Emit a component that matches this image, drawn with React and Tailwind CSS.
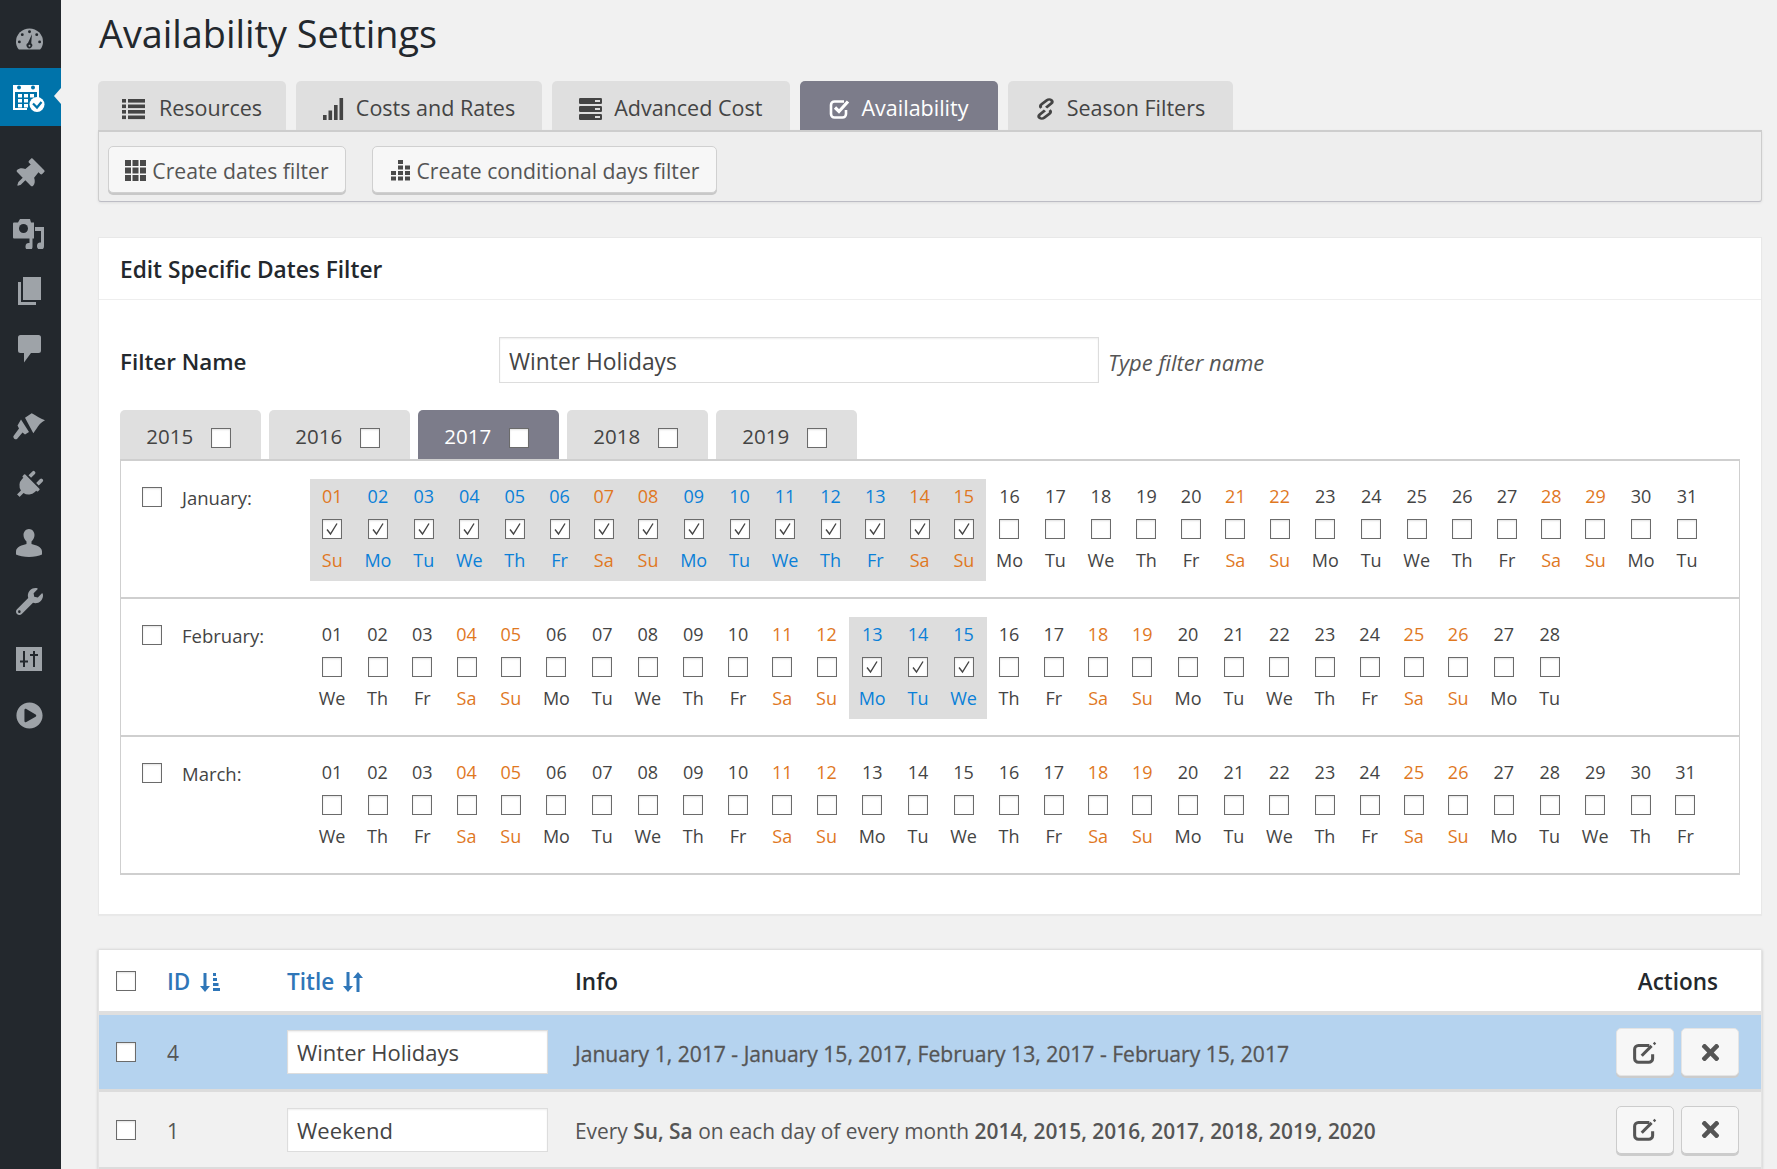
import { FaThumbtack, FaPlug, FaWrench, FaPlayCircle, FaTimes } from "react-icons/fa";

const dayWidth = {
  Su: "w-[44.5px]",
  Mo: "w-[46.8px]",
  Tu: "w-[45px]",
  We: "w-[46px]",
  Th: "w-[45px]",
  Fr: "w-[44.5px]",
  Sa: "w-[44px]",
};
const weekdays = ["Su", "Mo", "Tu", "We", "Th", "Fr", "Sa"];

const months = [
  { name: "January:", days: 31, start: 0, selected: [1, 15], labelCol: "w-[189px]" },
  { name: "February:", days: 28, start: 3, selected: [13, 15], labelCol: "w-[188px]" },
  { name: "March:", days: 31, start: 3, selected: [], labelCol: "w-[188px]" },
];

const Check = ({ checked, className = "" }) => (
  <span className={`block w-5 h-5 bg-white border border-[#6b6b6b] shadow-[inset_0_1px_2px_rgba(0,0,0,0.12)] ${className}`}>
    {checked && (
      <svg viewBox="0 0 18 18" className="w-full h-full">
        <path d="M4 9.5l3.5 4.5L14 3.5" fill="none" stroke="#444" strokeWidth="1.4" />
      </svg>
    )}
  </span>
);

const Day = ({ n, start, selected }) => {
  const wd = weekdays[(start + n - 1) % 7];
  const weekend = wd === "Su" || wd === "Sa";
  const isSel = selected.length > 0 && n >= selected[0] && n <= selected[1];
  const color = weekend ? "text-[#e0781f]" : isSel ? "text-[#0a80d8]" : "text-[#444]";
  return (
    <div className={`${dayWidth[wd]} shrink-0 h-[102px] flex flex-col items-center pt-[5px] ${isSel ? "bg-[#dddddd]" : ""}`}>
      <span className={`text-[18px] leading-6 ${color}`}>{String(n).padStart(2, "0")}</span>
      <Check checked={isSel} className="mt-[11px]" />
      <span className={`text-[18px] leading-6 mt-[9px] ${color}`}>{wd}</span>
    </div>
  );
};

const MonthRow = ({ name, days, start, selected, labelCol }) => (
  <div className="h-[138px] flex border-t-2 border-[#cfcfcf] pt-[18px]">
    <div className={`${labelCol} shrink-0 flex pl-[21px] pt-[7px]`}>
      <Check className="mt-px" />
      <span className="ml-[20px] text-[18.5px] leading-6 text-[#444]">{name}</span>
    </div>
    <div className="flex items-start">
      {Array.from({ length: days }, (_, i) => (
        <Day key={i} n={i + 1} start={start} selected={selected} />
      ))}
    </div>
  </div>
);

const Grid3 = () => (
  <svg viewBox="0 0 21 21" className="w-[21px] h-[21px]" fill="#4a4a4a">
    {[0, 7.5, 15].map((y) =>
      [0, 7.5, 15].map((x) => <rect key={`${x}-${y}`} x={x} y={y} width="6" height="6" />)
    )}
  </svg>
);

const Stacked = () => (
  <svg viewBox="0 0 21 21" className="w-[21px] h-[21px]" fill="#4a4a4a">
    <rect x="8" y="0" width="5" height="4" />
    <rect x="8" y="5.5" width="5" height="4" />
    <rect x="15" y="5.5" width="5" height="4" />
    <rect x="8" y="11" width="5" height="4" />
    <rect x="15" y="11" width="5" height="4" />
    <rect x="1" y="11" width="5" height="4" />
    <rect x="1" y="16.5" width="5" height="4" />
    <rect x="8" y="16.5" width="5" height="4" />
    <rect x="15" y="16.5" width="5" height="4" />
  </svg>
);

const ListIcon = () => (
  <svg viewBox="0 0 23 22" className="w-[23px] h-[22px]" fill="#444">
    {[1, 6.5, 12, 17.5].map((y) => (
      <g key={y}>
        <rect x="0" y={y} width="4" height="3.6" />
        <rect x="6" y={y} width="17" height="3.6" />
      </g>
    ))}
  </svg>
);

const SignalIcon = () => (
  <svg viewBox="0 0 21 22" className="w-[21px] h-[22px]" fill="#444">
    <rect x="0" y="17" width="3.6" height="5" />
    <rect x="5.5" y="12.5" width="3.6" height="9.5" />
    <rect x="11" y="7" width="3.6" height="15" />
    <rect x="16.5" y="0" width="3.6" height="22" />
  </svg>
);

const ServerIcon = () => (
  <svg viewBox="0 0 23 22" className="w-[23px] h-[22px]">
    {[0, 8, 16].map((y) => (
      <g key={y}>
        <rect x="0" y={y} width="23" height="6" rx="1.2" fill="#444" />
        <rect x="16" y={y + 2} width="5" height="2" fill="#ddd" />
      </g>
    ))}
  </svg>
);

const ChainIcon = () => (
  <svg viewBox="0 0 18 26" preserveAspectRatio="none" className="w-[21px] h-[24px]" fill="none" stroke="#444" strokeWidth="2.6">
    <path d="M9.5 11.5L14 7a2.6 2.6 0 000-3.7 2.6 2.6 0 00-3.7 0L5.5 8a2.6 2.6 0 000 3.8" />
    <path d="M8.5 14.5L4 19a2.6 2.6 0 000 3.7 2.6 2.6 0 003.7 0l4.8-4.7a2.6 2.6 0 000-3.8" />
  </svg>
);

const CheckSquare = () => (
  <svg viewBox="0 0 22 22" className="w-[22px] h-[22px]" fill="none" stroke="#fff">
    <path d="M17 12v4a3.500 3.500 0 01-3.500 3.500H5.500A3.500 3.500 0 012 16V7a3.500 3.500 0 013.500-3.500H15" strokeWidth="2.600" />
    <path d="M6 9.500l4 4L19 3.500" strokeWidth="3.200" />
  </svg>
);

const EditIcon = () => (
  <svg viewBox="0 0 22 21" className="w-[24px] h-[23px]" fill="none" stroke="#555">
    <path d="M18 12v4a3.500 3.500 0 01-3.500 3.500H5A3.500 3.500 0 011.500 16V7.500A3.500 3.500 0 015 4h10" strokeWidth="2.800" />
    <path d="M8 13.500L17 4.500" strokeWidth="2.800" />
    <path d="M19 3l1.500-1.500" strokeWidth="2.200" />
  </svg>
);

const tabs = [
  { label: "Resources", icon: <ListIcon />, width: "w-[188px]", gap: "gap-[14px]" },
  { label: "Costs and Rates", icon: <SignalIcon />, width: "w-[246px]", gap: "gap-[12px]" },
  { label: "Advanced Cost", icon: <ServerIcon />, width: "w-[237.5px]", gap: "gap-[12px]" },
  { label: "Availability", icon: <CheckSquare />, width: "w-[198px]", gap: "gap-[11px]", active: true },
  { label: "Season Filters", icon: <ChainIcon />, width: "w-[225px]", gap: "gap-[11px]" },
];

const sideColor = "#9ea3a8";

const Gauge = () => (
  <svg viewBox="0 0 28 22" className="w-[27px] h-[22px]">
    <path d="M3 22C1 19.500 0 17 0 14a14 14 0 0128 0c0 3-1 5.500-3 8z" fill={sideColor} />
    <circle cx="14" cy="3.500" r="1.500" fill="#23282d" />
    <circle cx="6.500" cy="6.500" r="1.500" fill="#23282d" />
    <circle cx="21.500" cy="6.500" r="1.500" fill="#23282d" />
    <circle cx="3.500" cy="14" r="1.500" fill="#23282d" />
    <circle cx="24.500" cy="14" r="1.500" fill="#23282d" />
    <path d="M16.500 6L15.800 15.500a2.900 2.900 0 11-3.400-.3z" fill="#23282d" />
    <circle cx="14" cy="18" r="1" fill={sideColor} />
  </svg>
);

const CalendarIcon = () => (
  <svg viewBox="0 0 32 29" className="w-8 h-[29px]">
    <path d="M0 2h26v15h-2V9H2v16h12v2H0z" fill="#fff" />
    <circle cx="6" cy="4.500" r="2" fill="#0073aa" />
    <circle cx="20" cy="4.500" r="2" fill="#0073aa" />
    {[5, 11, 17].map((x) =>
      [11, 16, 21].map((y) => (x === 17 && y > 15 ? null : <rect key={`${x}${y}`} x={x} y={y} width="4" height="3.500" fill="#fff" />))
    )}
    <circle cx="24" cy="21.500" r="7.500" fill="#fff" />
    <path d="M20 20.500l4 4 4.500-5.500" fill="none" stroke="#0073aa" strokeWidth="2.200" />
  </svg>
);

const Media = () => (
  <svg viewBox="0 0 32 31" className="w-8 h-[31px]">
    <path d="M1 4.500h4l2-3.500h10l1 3.500h3v16H1a1 1 0 01-1-1V5.500a1 1 0 011-1z" fill={sideColor} />
    <circle cx="10.500" cy="10.500" r="4.500" fill="#23282d" />
    <path d="M31 9v19a3.500 3.500 0 11-3-3.400V13h-6v-4z" fill={sideColor} />
    <path d="M16.500 16.500h3v12a3.500 3.500 0 11-3-3.400z" fill={sideColor} />
  </svg>
);

const Pages = () => (
  <svg viewBox="0 0 23 28" className="w-[23px] h-7">
    <path d="M0 5h3v20h15v3H0z" fill={sideColor} />
    <rect x="5" y="0" width="18" height="23" fill={sideColor} />
  </svg>
);

const Comment = () => (
  <svg viewBox="0 0 23 28" className="w-[23px] h-7">
    <path d="M2.500 0h18A2.500 2.500 0 0123 2.500v13a2.500 2.500 0 01-2.500 2.500H13l-7 9.500V18H2.500A2.500 2.500 0 010 15.500v-13A2.500 2.500 0 012.500 0z" fill={sideColor} />
  </svg>
);

const Brush = () => (
  <svg viewBox="0 0 32 28" className="w-8 h-7">
    <path d="M12 4.700L18.700.3C23 2 27 6 32 7.300 28 9 25 13 24 15l-3.700 5.300z" fill={sideColor} />
    <path d="M8 6.500L16 19l-4 2.500-2.500-2L4 26a2.500 2.500 0 01-3.500-3l5.500-7.500-1.500-3z" fill={sideColor} />
  </svg>
);

const UserIcon = () => (
  <svg viewBox="0 0 26 28" className="w-[26px] h-7">
    <path d="M13 0c3.200 0 5.500 2.800 5.500 6 0 2.800-1.500 5.200-3 6.500v2.500c4 1 10.500 2.800 10.500 7.500v3c-3 1.500-8 2.500-13 2.500S3 27 0 25.500v-3C0 17.800 6.500 16 10.500 15v-2.500C9 11.200 7.500 8.800 7.500 6 7.500 2.800 9.800 0 13 0z" fill={sideColor} />
  </svg>
);

const Sliders = () => (
  <svg viewBox="0 0 26 24" className="w-[26px] h-6">
    <rect width="26" height="24" fill={sideColor} />
    <path d="M8 4v16M18 4v16M4 14.500h8M14 8h8" stroke="#23282d" strokeWidth="2" />
  </svg>
);

const sideItems = [
  { icon: <Gauge />, mt: "mt-[10px]" },
  { icon: <CalendarIcon />, active: true },
  { icon: <FaThumbtack className="text-[30px] rotate-45 mr-[3px]" />, mt: "mt-[20px]" },
  { icon: <Media /> },
  { icon: <Pages /> },
  { icon: <Comment /> },
  { icon: <Brush />, mt: "mt-[20px]" },
  { icon: <FaPlug className="text-[29px] rotate-45 mr-[2px]" /> },
  { icon: <UserIcon /> },
  { icon: <FaWrench className="text-[27px]" /> },
  { icon: <Sliders /> },
  { icon: <FaPlayCircle className="text-[27px]" />, mt: "-mt-[2px]" },
];

const Sidebar = () => (
  <div className="w-[61px] shrink-0 bg-[#23282d] text-[#9ea3a8]">
    {sideItems.map((item, i) => (
      <div
        key={i}
        className={`relative h-[58px] flex items-center justify-center pr-[3px] ${item.mt || ""} ${item.active ? "bg-[#0073aa]" : ""}`}
      >
        {item.icon}
        {item.active && (
          <span className="absolute right-0 top-[20px] border-y-[8px] border-r-[7px] border-y-transparent border-r-[#f1f1f1]" />
        )}
      </div>
    ))}
  </div>
);

const ActionBtn = ({ children, flat }) => (
  <button
    className={`w-[58px] h-[48px] flex items-center justify-center rounded-[5px] bg-[#f7f7f7] text-[#555] ${
      flat ? "border border-[#ccc] shadow-[0_2px_0_#ccc]" : "border border-[#e4e4e4] shadow-[0_2px_0_#ccc]"
    }`}
  >
    {children}
  </button>
);

const Row = ({ id, title, bg, children, flat, height }) => (
  <div className={`flex items-center pl-[17px] pr-[22px] ${height} ${bg} border-b-[3px] border-[#dcdcdc]`}>
    <Check className="shrink-0" />
    <span className="w-[151px] pl-[31px] pt-[4px] shrink-0 text-[21px] text-[#555]">{id}</span>
    <input
      readOnly
      value={title}
      className="w-[261px] h-[44px] shrink-0 bg-white border border-[#ddd] px-[9px] text-[22px] font-medium text-[#444] shadow-[inset_0_1px_2px_rgba(0,0,0,0.07)] outline-none"
    />
    <div className="ml-[27px] pt-[4px] flex-1 text-[#555] whitespace-nowrap">{children}</div>
    <div className="flex gap-[7px] shrink-0">
      <ActionBtn flat={flat}><EditIcon /></ActionBtn>
      <ActionBtn flat={flat}><FaTimes className="text-[25px]" /></ActionBtn>
    </div>
  </div>
);

export default function App() {
  return (
    <div className="flex h-[1169px] overflow-hidden bg-[#f1f1f1] font-['Open_Sans','Liberation_Sans',sans-serif] text-[#444]">
      <Sidebar />
      <main className="flex-1 pl-[37px] pr-[15px] min-w-0">
        <h1 className="h-[81px] pt-[9px] pl-px text-[37.8px] leading-[50px] text-[#23282d]">Availability Settings</h1>

        {/* Top tabs */}
        <div className="flex gap-[10px] h-[49px]">
          {tabs.map((t) => (
            <div
              key={t.label}
              className={`${t.width} flex items-center justify-center ${t.gap} rounded-t-[5px] text-[21.5px] pt-[6px] ${
                t.active ? "bg-[#7c7c8a] text-white" : "bg-[#dfdfdf] text-[#444]"
              }`}
            >
              {t.icon}
              <span>{t.label}</span>
            </div>
          ))}
        </div>

        {/* Toolbar */}
        <div className="h-[72px] flex gap-[26px] items-start pl-[9px] pt-[14px] bg-[#eeeeee] border border-t-2 border-[#cdcdcd] border-b-[#bdbdc5] rounded-b-[3px] shadow-[0_1px_3px_rgba(0,0,0,0.08)]">
          <button className="w-[238px] h-[47px] pt-[2px] flex items-center justify-center gap-[6px] rounded-[5px] bg-[#f7f7f7] border border-[#d0d0d0] shadow-[0_2px_0_#c8c8c8] text-[21.2px] text-[#555]">
            <Grid3 />
            Create dates filter
          </button>
          <button className="w-[345px] h-[47px] pt-[2px] flex items-center justify-center gap-[6px] rounded-[5px] bg-[#f7f7f7] border border-[#d0d0d0] shadow-[0_2px_0_#c8c8c8] text-[21.2px] text-[#555]">
            <Stacked />
            Create conditional days filter
          </button>
        </div>

        {/* Edit filter card */}
        <section className="mt-[35px] h-[678px] bg-white border border-[#e8e8e8] shadow-[0_1px_1px_rgba(0,0,0,0.03)]">
          <div className="h-[62px] flex items-center pl-[21px] pt-[4px] border-b border-[#eeeeee] text-[22.7px] font-semibold text-[#23282d]">
            Edit Specific Dates Filter
          </div>
          <div className="h-[46px] mt-[37px] flex items-center pl-[21px]">
            <label className="w-[379px] pt-[3px] text-[22.4px] font-semibold text-[#23282d]">Filter Name</label>
            <input
              readOnly
              value="Winter Holidays"
              className="w-[600px] h-[46px] bg-white border border-[#ddd] px-[9px] pt-[2px] text-[22.8px] text-[#444] shadow-[inset_0_1px_2px_rgba(0,0,0,0.07)] outline-none"
            />
            <span className="ml-[9px] pt-[4px] text-[22px] italic text-[#555]">Type filter name</span>
          </div>

          {/* Year tabs */}
          <div className="flex gap-[8px] mt-[27px] ml-[21px] h-[49px]">
            {["2015", "2016", "2017", "2018", "2019"].map((y) => (
              <div
                key={y}
                className={`w-[141px] flex items-center justify-center gap-[17.5px] rounded-t-[5px] pt-[4px] pr-[4px] text-[20.5px] ${
                  y === "2017" ? "bg-[#7c7c8a] text-white" : "bg-[#dfdfdf] text-[#444]"
                }`}
              >
                <span>{y}</span>
                <Check className="mt-[3px]" />
              </div>
            ))}
          </div>

          {/* Calendar */}
          <div className="mx-[21px] h-[416px] border-x border-b-2 border-[#cfcfcf]">
            {months.map((m) => (
              <MonthRow key={m.name} {...m} />
            ))}
          </div>
        </section>

        {/* Table */}
        <section className="mt-[35px] border-x border-[#e4e4e4] shadow-[0_0_3px_rgba(0,0,0,0.2)]">
          <div className="h-[65px] flex items-center pl-[17px] pr-[43px] pt-[2px] bg-white border-b-4 border-[#dfdfdf]">
            <Check className="shrink-0 -mt-[2px]" />
            <span className="w-[151px] pl-[31px] shrink-0 flex items-center gap-[10px] text-[22.5px] font-semibold text-[#2f76b8]">
              ID
              <svg viewBox="0 0 20 20" className="w-5 h-5" fill="#2f76b8">
                <path d="M3.500 1h3v13H10l-5 6-5-6h3.500z" />
                <rect x="13" y="1" width="3" height="3" />
                <rect x="13" y="6" width="4" height="3" />
                <rect x="13" y="11" width="5.500" height="3" />
                <rect x="13" y="16" width="7" height="3" />
              </svg>
            </span>
            <span className="w-[288px] shrink-0 flex items-center gap-[9px] text-[22.5px] font-semibold text-[#2f76b8]">
              Title
              <svg viewBox="0 0 20 22" className="w-[20px] h-[22px]" fill="#2f76b8">
                <path d="M3.500 1h3v14H10l-5 6-5-6h3.500z" />
                <path d="M13.500 21h3V7H20l-5-6-5 6h3.500z" />
              </svg>
            </span>
            <span className="flex-1 text-[22.5px] font-semibold text-[#23282d]">Info</span>
            <span className="text-[22.5px] font-semibold text-[#23282d]">Actions</span>
          </div>
          <Row id="4" title="Winter Holidays" bg="bg-[#b5d3ef]" height="h-[77px]">
            <span className="text-[21.1px] [-webkit-text-stroke:0.3px_#555]">January 1, 2017 - January 15, 2017, February 13, 2017 - February 15, 2017</span>
          </Row>
          <Row id="1" title="Weekend" bg="bg-[#f1f1f1]" height="h-[78px]" flat>
            <span className="text-[20.9px]">
              Every <b className="font-semibold">Su, Sa</b> on each day of every month{" "}
              <b className="font-semibold">2014, 2015, 2016, 2017, 2018, 2019, 2020</b>
            </span>
          </Row>
        </section>
      </main>
    </div>
  );
}
